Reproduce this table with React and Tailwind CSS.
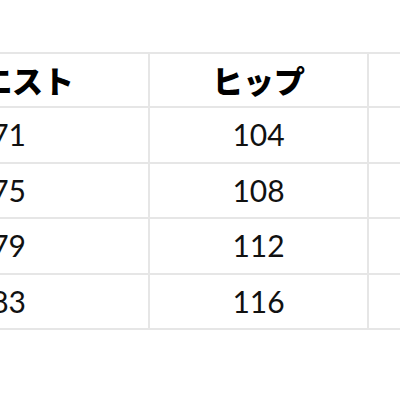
import React from "react";

const rows = [
  ["71", "104"],
  ["75", "108"],
  ["79", "112"],
  ["83", "116"],
];

const line = "border-[#e6e6e6]";

export default function App() {
  return (
    <div className="w-[400px] h-[400px] bg-white overflow-hidden relative">
      <div className="absolute left-[-71px] top-[52px] w-[520px]">
        <div className={`grid grid-cols-[219px_219px_219px] border-t-2 ${line}`}>
          <div className={`h-[54px] flex items-center justify-end pr-[74px] border-b-2 ${line} font-black text-[31px] text-black [font-family:'Noto_Sans_CJK_JP',sans-serif]`}>
            ウエスト
          </div>
          <div className={`h-[54px] flex items-center justify-center border-b-2 border-l-2 ${line} font-black text-[31px] text-black [font-family:'Noto_Sans_CJK_JP',sans-serif]`}>
            ヒップ
          </div>
          <div className={`h-[54px] border-b-2 border-l-2 ${line}`}></div>
          {rows.map(([w, h]) => (
            <React.Fragment key={w}>
              <div className={`h-[55.5px] flex items-center justify-end pr-[122px] border-b-2 ${line} text-[30px] font-normal text-[#111] [font-family:Lato,sans-serif]`}>
                {w}
              </div>
              <div className={`h-[55.5px] flex items-center justify-center border-b-2 border-l-2 ${line} text-[30px] font-normal text-[#111] [font-family:Lato,sans-serif]`}>
                {h}
              </div>
              <div className={`h-[55.5px] border-b-2 border-l-2 ${line}`}></div>
            </React.Fragment>
          ))}
        </div>
      </div>
    </div>
  );
}
